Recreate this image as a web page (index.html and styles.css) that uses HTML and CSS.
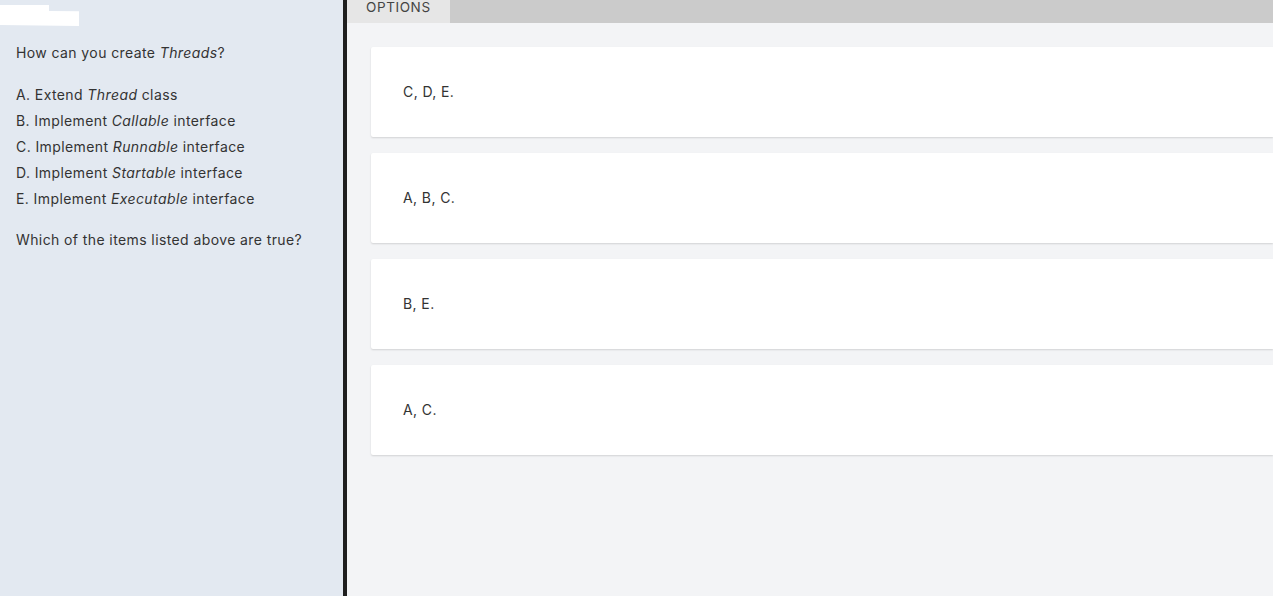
FILE: index.html
```html
<!DOCTYPE html>
<html lang="en">
<head>
  <meta charset="UTF-8">
  <meta name="viewport" content="width=device-width, initial-scale=1.0">
  <title>Question</title>
  <link rel="stylesheet" href="styles.css">
</head>
<body>
  <div class="page">
    <div class="question">
      <div class="logo"></div>
      <p class="q-title">How can you create <em>Threads</em>?</p>
      <ul class="items">
        <li>A. Extend <em>Thread</em> class</li>
        <li>B. Implement <em>Callable</em> interface</li>
        <li>C. Implement <em>Runnable</em> interface</li>
        <li>D. Implement <em>Startable</em> interface</li>
        <li>E. Implement <em>Executable</em> interface</li>
      </ul>
      <p class="q-ask">Which of the items listed above are true?</p>
    </div>
    <div class="answers">
      <div class="tabs"><span class="tab">OPTIONS</span></div>
      <div class="options">
        <div class="card">C, D, E.</div>
        <div class="card">A, B, C.</div>
        <div class="card">B, E.</div>
        <div class="card">A, C.</div>
      </div>
    </div>
  </div>
</body>
</html>
```

FILE: styles.css
```css
body { margin: 0; font-family: "Inter", "Open Sans", sans-serif; color: #333; font-size: 14px; letter-spacing: 0.4px; overflow: hidden; }
.page { display: flex; height: 596px; }
.question { background: #e3e9f1; border-right: 4px solid #1f1f1f; padding: 0 16px; width: 311px; }
.logo { width: 79px; height: 21px; background: #fff; margin: 5px 0 0 -16px; clip-path: polygon(0 0, 62% 0, 62% 28%, 100% 30%, 100% 100%, 0 95%); }
.q-title { margin: 18px 0 0; line-height: 18px; }
.items { list-style: none; margin: 24px 0 0; padding: 0; }
.items li { line-height: 18px; margin-bottom: 8px; }
.q-ask { margin: 23px 0 0; line-height: 18px; }
.answers { flex: 1; background: #f3f4f6; }
.tabs { height: 23px; background: #cbcbcb; }
.tab { display: inline-block; width: 103px; height: 23px; line-height: 14px; background: #e6e6e6; padding-left: 19px; box-sizing: border-box; color: #444; font-size: 13.5px; letter-spacing: 0.6px; vertical-align: top; }
.options { padding: 24px 0 0 24px; display: flex; flex-direction: column; gap: 16px; }
.card { height: 90px; background: #fff; border-radius: 2px 0 0 2px; box-shadow: 0 1px 2px rgba(0,0,0,0.14); display: flex; align-items: center; padding: 0 0 2px 32px; box-sizing: border-box; }
```
